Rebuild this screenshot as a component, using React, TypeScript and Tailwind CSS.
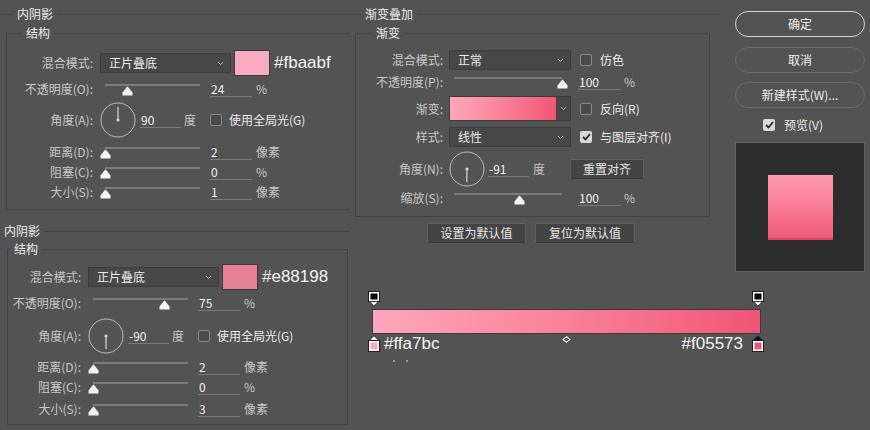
import React from 'react';

const LINE = 'bg-[#424242]';
const HEX_FONT = "font-['Liberation_Sans',Arial,sans-serif]";

function Chevron() {
  return (
    <svg width="7" height="5" viewBox="0 0 7 5" className="shrink-0">
      <path d="M1 1 L3.5 3.5 L6 1" fill="none" stroke="#b8b8b8" strokeWidth="1" />
    </svg>
  );
}

function Select({ value, width }: { value: string; width: string }) {
  return (
    <div className={`${width} h-[20px] flex items-center justify-between pl-[8px] pr-[6px] bg-[#474747] border border-[#3c3c3c] text-[#ececec]`}>
      <span>{value}</span>
      <Chevron />
    </div>
  );
}

function Slider({ value, width }: { value: number; width: string }) {
  return (
    <div className={`relative ${width} h-[12px] self-center mt-[1px]`}>
      <div className="absolute left-[5px] right-[5px] top-0 h-[2px] bg-[#7c7c7c]" />
      <svg
        className="absolute top-[2px] -ml-[5.5px]"
        style={{ left: `calc(5px + ${value} * (100% - 10px))` }}
        width="11"
        height="10"
        viewBox="0 0 11 10"
      >
        <path d="M5.5 0.5 Q6 0.5 10.5 6.5 V9.5 H0.5 V6.5 Q5 0.5 5.5 0.5 Z" fill="#f4f4f4" />
      </svg>
    </div>
  );
}

function NumField({ value, width, className = '' }: { value: string; width: string; className?: string }) {
  return (
    <div className={`${width} ${className} h-[16px] border-b border-[#7b7b7b] pl-[1px] text-[#f2f2f2] leading-[15px]`}>
      {value}
    </div>
  );
}

function Checkbox({ checked = false }: { checked?: boolean }) {
  if (checked) {
    return (
      <div className="w-[12px] h-[12px] rounded-[2px] bg-[#dadada] flex items-center justify-center shrink-0">
        <svg width="9" height="8" viewBox="0 0 9 8">
          <path d="M1 4 L3.5 6.5 L8 1" fill="none" stroke="#2a2a2a" strokeWidth="1.8" />
        </svg>
      </div>
    );
  }
  return <div className="w-[12px] h-[12px] rounded-[2px] border border-[#8a8a8a] bg-[#4a4a4a] shrink-0" />;
}

function Dial({ deg }: { deg: number }) {
  const rad = (deg * Math.PI) / 180;
  const x2 = 18 + 13 * Math.cos(rad);
  const y2 = 18 - 13 * Math.sin(rad);
  return (
    <svg width="36" height="36" viewBox="0 0 36 36" className="shrink-0">
      <circle cx="18" cy="18" r="17" fill="none" stroke="#bdbdbd" strokeWidth="1" />
      <line x1="18" y1="18" x2={x2} y2={y2} stroke="#d8d8d8" strokeWidth="1.2" />
      <circle cx="18" cy="18" r="1.6" fill="#d8d8d8" />
    </svg>
  );
}

type ShadowCfg = {
  outer: string;
  lead: string;
  box: string;
  seg: string;
  label: string;
  gaps: string[];
  swatch: string;
  hex: string;
  opacity: string;
  opacityPos: number;
  angle: number;
  distance: string;
  choke: string;
  size: string;
};

const shadows: ShadowCfg[] = [
  {
    outer: '',
    lead: 'w-[13px]',
    box: 'mt-[5px] ml-[6px] border-l border-b border-[#424242] pb-[7px]',
    seg: 'w-[15px]',
    label: 'w-[86px]',
    gaps: ['mt-[9px]', 'mt-[3px]', 'mt-[2px]', 'mt-[3px]', 'mt-0', 'mt-0'],
    swatch: 'bg-[#fbaabf]',
    hex: '#fbaabf',
    opacity: '24',
    opacityPos: 0.24,
    angle: 90,
    distance: '2',
    choke: '0',
    size: '1',
  },
  {
    outer: 'mt-[7px]',
    lead: 'w-0',
    box: 'mt-[4px] ml-[7px] mr-[2px] border-l border-r border-b border-[#424242] pb-[5px]',
    seg: 'w-[2px]',
    label: 'w-[73px]',
    gaps: ['mt-[7px]', 'mt-[3px]', 'mt-[4px]', 'mt-[2px]', 'mt-0', 'mt-[2px]'],
    swatch: 'bg-[#e88198]',
    hex: '#e88198',
    opacity: '75',
    opacityPos: 0.75,
    angle: -90,
    distance: '2',
    choke: '0',
    size: '3',
  },
];

function Label({ width, text }: { width: string; text: string }) {
  return <span className={`${width} text-right text-[#c9c9c9] shrink-0`}>{text}</span>;
}

function SliderRow({ cfg, gap, label, value, pos, unit }: { cfg: ShadowCfg; gap: string; label: string; value: string; pos: number; unit: string }) {
  return (
    <div className={`flex items-center h-[20px] ${gap}`}>
      <Label width={cfg.label} text={label} />
      <div className="ml-[7px] flex items-center">
        <Slider value={pos} width="w-[105px]" />
        <NumField value={value} width="w-[42px]" className="ml-[5px]" />
        <span className="ml-[4px] text-[#c9c9c9]">{unit}</span>
      </div>
    </div>
  );
}

function InnerShadow({ cfg }: { cfg: ShadowCfg }) {
  return (
    <div className={`flex flex-col ${cfg.outer}`}>
      <div className="flex items-center h-[28px]">
        <div className={`${cfg.lead} h-px ${LINE}`} />
        <span className="px-[4px] text-[#ececec]">内阴影</span>
        <div className={`flex-1 h-px ${LINE}`} />
      </div>
      <div className={`flex flex-col ${cfg.box}`}>
        <div className="-mt-[8px] h-[16px] flex items-center">
          <div className={`${cfg.seg} h-px ${LINE}`} />
          <span className="px-[4px] text-[#ececec]">结构</span>
          <div className={`flex-1 h-px ${LINE}`} />
        </div>

        <div className={`flex items-center h-[26px] ${cfg.gaps[0]}`}>
          <Label width={cfg.label} text="混合模式:" />
          <div className="ml-[7px] flex items-center">
            <Select value="正片叠底" width="w-[131px]" />
            <div className={`ml-[3px] w-[36px] h-[26px] border border-[#3a3a3a] ${cfg.swatch}`} />
            <span className={`ml-[4px] text-[17px] text-[#f4f4f4] ${HEX_FONT}`}>{cfg.hex}</span>
          </div>
        </div>

        <SliderRow cfg={cfg} gap={cfg.gaps[1]} label="不透明度(O):" value={cfg.opacity} pos={cfg.opacityPos} unit="%" />

        <div className={`flex items-center h-[38px] ${cfg.gaps[2]}`}>
          <Label width={cfg.label} text="角度(A):" />
          <div className="ml-[7px] flex items-center">
            <Dial deg={cfg.angle} />
            <NumField value={String(cfg.angle)} width="w-[41px]" className="ml-[4px]" />
            <span className="ml-[3px] text-[#c9c9c9]">度</span>
            <div className="ml-[14px]">
              <Checkbox />
            </div>
            <span className="ml-[7px] text-[#ececec]">使用全局光(G)</span>
          </div>
        </div>

        <SliderRow cfg={cfg} gap={cfg.gaps[3]} label="距离(D):" value={cfg.distance} pos={0} unit="像素" />
        <SliderRow cfg={cfg} gap={cfg.gaps[4]} label="阻塞(C):" value={cfg.choke} pos={0} unit="%" />
        <SliderRow cfg={cfg} gap={cfg.gaps[5]} label="大小(S):" value={cfg.size} pos={0} unit="像素" />
      </div>
    </div>
  );
}

function DarkButton({ text, width }: { text: string; width: string }) {
  return (
    <div className={`${width} h-[20px] flex items-center justify-center bg-[#444444] border border-[#5f5f5f] border-b-[#3a3a3a] text-[#e6e6e6]`}>
      {text}
    </div>
  );
}

function TopStop() {
  return (
    <svg width="12" height="16" viewBox="0 0 12 16">
      <rect x="0.5" y="0.5" width="11" height="10" fill="#ffffff" stroke="#1e1e1e" />
      <rect x="2.5" y="2.5" width="7" height="6" fill="#000000" />
      <path d="M1.5 10.5 H10.5 L6 15 Z" fill="#ffffff" stroke="#1e1e1e" strokeWidth="0.8" />
    </svg>
  );
}

function BottomStop({ tip, color }: { tip: string; color: string }) {
  return (
    <svg width="12" height="17" viewBox="0 0 12 17">
      <path d="M6 0.8 L10.8 5.5 H1.2 Z" fill={tip} stroke="#1e1e1e" strokeWidth="0.8" />
      <rect x="0.5" y="5.5" width="11" height="11" fill="#ffffff" stroke="#1e1e1e" />
      <rect x="2.5" y="7.5" width="7" height="7" fill={color} />
    </svg>
  );
}

function GradientOverlay() {
  const label = 'w-[87px]';
  return (
    <div className="flex flex-col w-[370px]">
      <div className="flex items-center h-[28px]">
        <div className={`w-[11px] h-px ${LINE}`} />
        <span className="px-[4px] text-[#ececec]">渐变叠加</span>
        <div className={`flex-1 h-px ${LINE}`} />
      </div>
      <div className="mt-[5px] ml-[5px] w-[355px] flex flex-col border-l border-r border-b border-[#424242] pb-[8px]">
        <div className="-mt-[8px] h-[16px] flex items-center">
          <div className={`w-[16px] h-px ${LINE}`} />
          <span className="px-[4px] text-[#ececec]">渐变</span>
          <div className={`flex-1 h-px ${LINE}`} />
        </div>

        <div className="flex items-center h-[20px] mt-[9px]">
          <Label width={label} text="混合模式:" />
          <div className="ml-[6px] flex items-center">
            <Select value="正常" width="w-[122px]" />
            <div className="ml-[9px]">
              <Checkbox />
            </div>
            <span className="ml-[8px] text-[#ececec]">仿色</span>
          </div>
        </div>

        <div className="flex items-center h-[20px] mt-[2px]">
          <Label width={label} text="不透明度(P):" />
          <div className="ml-[6px] flex items-center">
            <Slider value={1} width="w-[118px]" />
            <NumField value="100" width="w-[43px]" className="ml-[11px]" />
            <span className="ml-[3px] text-[#c9c9c9]">%</span>
          </div>
        </div>

        <div className="flex items-center h-[25px] mt-[4px]">
          <Label width={label} text="渐变:" />
          <div className="ml-[6px] flex items-center">
            <div className="flex w-[122px] h-[25px] border border-[#3a3a3a]">
              <div className="flex-1 bg-linear-to-r from-[#ffa7bc] to-[#f05573]" />
              <div className="w-[14px] bg-[#474747] flex items-center justify-center">
                <Chevron />
              </div>
            </div>
            <div className="ml-[9px]">
              <Checkbox />
            </div>
            <span className="ml-[8px] text-[#ececec]">反向(R)</span>
          </div>
        </div>

        <div className="flex items-center h-[20px] mt-[6px]">
          <Label width={label} text="样式:" />
          <div className="ml-[6px] flex items-center">
            <Select value="线性" width="w-[122px]" />
            <div className="ml-[9px]">
              <Checkbox checked />
            </div>
            <span className="ml-[8px] text-[#ececec]">与图层对齐(I)</span>
          </div>
        </div>

        <div className="flex items-center h-[36px] mt-[4px]">
          <Label width={label} text="角度(N):" />
          <div className="ml-[6px] flex items-center">
            <Dial deg={-91} />
            <NumField value="-91" width="w-[41px]" className="ml-[3px]" />
            <span className="ml-[4px] text-[#c9c9c9]">度</span>
            <div className="ml-[25px]">
              <DarkButton text="重置对齐" width="w-[74px]" />
            </div>
          </div>
        </div>

        <div className="flex items-center h-[20px] mt-[1px]">
          <Label width={label} text="缩放(S):" />
          <div className="ml-[6px] flex items-center">
            <Slider value={0.61} width="w-[118px]" />
            <NumField value="100" width="w-[43px]" className="ml-[11px]" />
            <span className="ml-[3px] text-[#c9c9c9]">%</span>
          </div>
        </div>
      </div>

      <div className="flex mt-[6px] ml-[77px] gap-[9px]">
        <DarkButton text="设置为默认值" width="w-[99px]" />
        <DarkButton text="复位为默认值" width="w-[100px]" />
      </div>

      <div className="mt-[48px] ml-[18px] w-[396px] h-[16px] flex justify-between">
        <TopStop />
        <TopStop />
      </div>
      <div className="mt-[2px] ml-[22px] w-[389px] h-[25px] border border-[#3a3a3a] bg-linear-to-r from-[#ffa7bc] to-[#f05573]" />
      <div className="mt-[1px] ml-[18px] w-[396px] h-[17px] grid grid-cols-[1fr_auto_1fr]">
        <div className="flex items-end">
          <BottomStop tip="#ffffff" color="#ffa7bc" />
          <span className={`ml-[4px] text-[17px] leading-[17px] text-[#f4f4f4] ${HEX_FONT}`}>#ffa7bc</span>
        </div>
        <svg width="9" height="7" viewBox="0 0 9 7" className="mt-[1px]">
          <path d="M4.5 0.7 L8 3.5 L4.5 6.3 L1 3.5 Z" fill="none" stroke="#e8e8e8" strokeWidth="1.1" />
        </svg>
        <div className="flex items-end justify-end">
          <span className={`mr-[9px] text-[17px] leading-[17px] text-[#f4f4f4] ${HEX_FONT}`}>#f05573</span>
          <BottomStop tip="#111111" color="#f05573" />
        </div>
      </div>
      <div className="mt-[8px] ml-[43px] flex gap-[11px]">
        <div className="w-[2px] h-[2px] bg-[#9a9a9a]" />
        <div className="w-[2px] h-[2px] bg-[#9a9a9a]" />
      </div>
    </div>
  );
}

function RoundButton({ text, primary = false, className = '' }: { text: string; primary?: boolean; className?: string }) {
  return (
    <div
      className={`${className} w-[130px] h-[26px] rounded-full flex items-center justify-center text-[#ededed] ${
        primary ? 'border-[1.5px] border-[#d4d4d4]' : 'border border-[#6c6c6c]'
      }`}
    >
      {text}
    </div>
  );
}

function ActionColumn() {
  return (
    <div className="flex flex-col w-[150px] pl-[15px]">
      <RoundButton text="确定" primary className="mt-[11px]" />
      <RoundButton text="取消" className="mt-[10px]" />
      <RoundButton text="新建样式(W)..." className="mt-[9px]" />
      <div className="mt-[7px] h-[20px] flex items-center pl-[28px]">
        <Checkbox checked />
        <span className="ml-[9px] text-[#ececec]">预览(V)</span>
      </div>
      <div className="mt-[7px] w-[130px] h-[130px] bg-[#2c2c2c] border border-[#626262] flex items-center justify-center">
        <div className="w-[65px] h-[65px] bg-linear-to-b from-[#ff9ab1] to-[#f05a77] border-b-2 border-[#dc4666]" />
      </div>
    </div>
  );
}

export default function App() {
  return (
    <div className="w-[870px] h-[430px] bg-[#535353] flex overflow-hidden text-[12px] leading-[16px] text-[#d2d2d2] font-['Noto_Sans_CJK_SC',sans-serif]">
      <div className="flex flex-col w-[350px]">
        <InnerShadow cfg={shadows[0]} />
        <InnerShadow cfg={shadows[1]} />
      </div>
      <GradientOverlay />
      <ActionColumn />
    </div>
  );
}
